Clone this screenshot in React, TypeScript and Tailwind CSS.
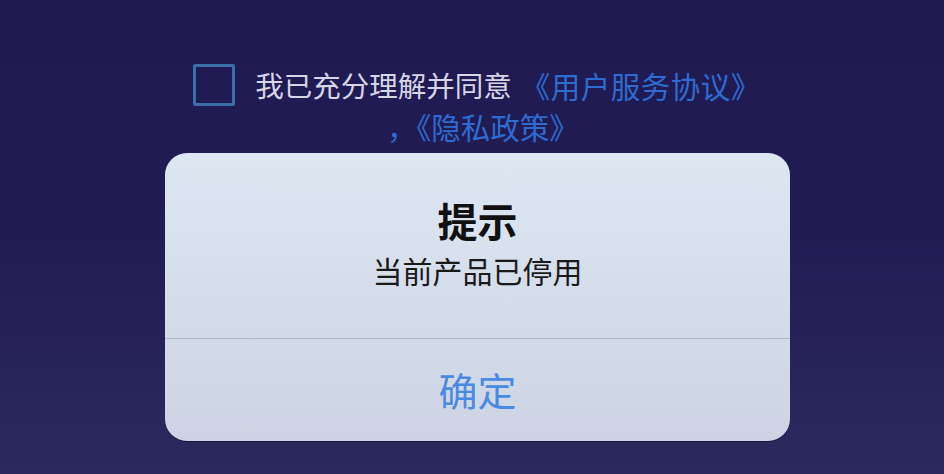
export default function App() {
  const font = { fontFamily: '"Noto Sans CJK SC", "Noto Sans", sans-serif' };
  return (
    <div
      className="w-[944px] h-[474px] overflow-hidden flex flex-col items-center bg-gradient-to-b from-[#201a52] via-[#221c55] to-[#2b2a5e]"
      style={font}
    >
      <div className="mt-[64px] flex items-center ml-[10px]">
        <div className="w-[42px] h-[42px] border-[3px] border-[#3c6fa8] rounded-[2px]" />
        <span className="ml-[20px] text-[28.5px] leading-[42px] text-[#d6d6e6]">我已充分理解并同意</span>
        <span className="ml-[9px] text-[29.5px] leading-[42px] tracking-[0.5px] text-[#2f6bd0]">《用户服务协议》</span>
      </div>
      <div className="ml-[22px] mt-[2px] text-[29.5px] leading-[36px] text-[#2f6bd0]">，《隐私政策》</div>
      <div className="mt-[9px] ml-[11px] w-[625px] h-[288px] rounded-[22px] overflow-hidden flex flex-col bg-gradient-to-b from-[#dde7f2] to-[#cdd3e4] shadow-[0_1px_0_#1a1640]">
        <div className="h-[185px] flex flex-col items-center">
          <div className="mt-[41px] text-[40px] leading-[52px] font-bold text-[#111]">提示</div>
          <div className="mt-[5px] text-[30px] leading-[38px] text-[#1a1a1a]">当前产品已停用</div>
        </div>
        <div className="h-[1px] bg-[#aeb7c6]" />
        <div className="flex-1 flex items-start justify-center">
          <span className="mt-[24px] text-[39px] leading-[52px] text-[#4a8ae0]">确定</span>
        </div>
      </div>
    </div>
  );
}
